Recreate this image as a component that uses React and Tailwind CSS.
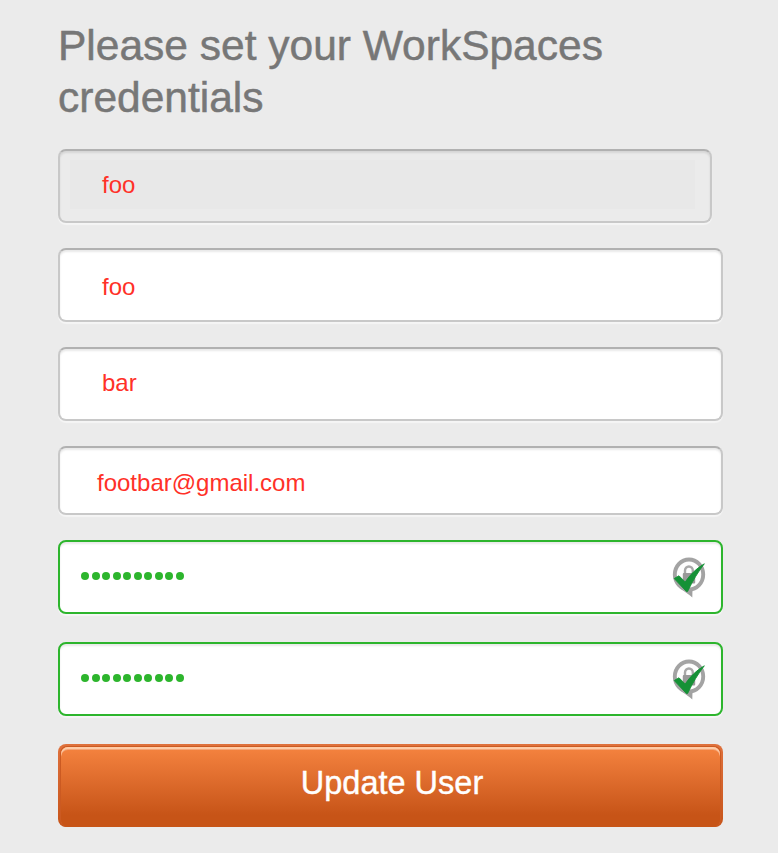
const fieldBase =
  'flex items-center rounded-[8px] border-2 shadow-[inset_0_2px_2px_rgba(0,0,0,0.09),0_2px_1px_rgba(255,255,255,0.5)]';
const grey = 'border-[#c8c8c8] border-t-[#b1b1b1]';

function VerifiedLock() {
  return (
    <svg width="34" height="42" viewBox="0 0 34 42" className="-mt-px mr-[15px] shrink-0" aria-hidden="true">
      <path d="M9 33 L18 39.5 L20.3 41.5 L20.5 32 Z" fill="#a0a0a0" />
      <ellipse cx="17" cy="18.5" rx="14.2" ry="15" fill="#fdfdfd" stroke="#a3a3a3" strokeWidth="3.9" />
      <path d="M13 18 V14.5 A3.9 4 0 0 1 20.8 14.5 V18" fill="none" stroke="#a8a8a8" strokeWidth="2.4" />
      <rect x="10.8" y="17" width="12.4" height="10.5" rx="1" fill="#999" />
      <path d="M2.2 22.5 L7 19.8 L13.2 26 C18 19 24 12.5 32.3 7.8 C26 16 20.5 25 15.6 35.5 H14.4 Z" fill="#159136" stroke="#159136" strokeWidth="0.9" strokeLinejoin="round" />
    </svg>
  );
}

function PasswordField() {
  return (
    <div className={`${fieldBase} h-[74px] justify-between border-[#2db52d] bg-white`}>
      <div className="-mt-[2px] ml-[21px] flex gap-[2.5px]" aria-label="password">
        {Array.from({ length: 10 }, (_, i) => (
          <span key={i} className="size-[8px] rounded-full bg-[#2db52d]" />
        ))}
      </div>
      <VerifiedLock />
    </div>
  );
}

export default function App() {
  return (
    <main className="h-[853px] w-[778px] overflow-hidden bg-[#ebebeb] pl-[58px] pt-[20px] font-['Liberation_Sans',Arial,sans-serif]">
      <h1 className="h-[129px] whitespace-nowrap text-[42.5px] leading-[52px] text-[#777] [-webkit-text-stroke:0.5px_#777]">
        Please set your WorkSpaces
        <br />
        credentials
      </h1>
      <form className="flex w-[665px] flex-col text-[24px] leading-[28px] text-[#ff3128]">
        <div className={`${fieldBase} ${grey} h-[74px] w-[654px] bg-[#ebebeb] pl-[10px]`}>
          <div className="-mt-[3px] flex h-[49px] w-[625px] items-center bg-[#e8e8e8] pl-[32px]">
            <span>foo</span>
          </div>
        </div>
        <div className={`${fieldBase} ${grey} mt-[25px] h-[74px] bg-white pl-[42px] pt-[4px]`}>foo</div>
        <div className={`${fieldBase} ${grey} mt-[25px] h-[74px] bg-white pb-[2px] pl-[42px]`}>bar</div>
        <div className={`${fieldBase} ${grey} mt-[25px] h-[69px] bg-white pl-[37px] pt-[4px]`}>footbar@gmail.com</div>
        <div className="mt-[25px] flex flex-col gap-[28px]">
          <PasswordField />
          <PasswordField />
        </div>
        <button
          type="button"
          className="mt-[28px] flex h-[83px] flex-col rounded-[8px] bg-linear-to-b from-[#df713c] to-[#c75418] px-[2px] pt-[2px] text-[32.5px] leading-[38px] text-white"
        >
          <span className="flex h-[81px] w-full rounded-[7px] bg-[#cb5a22] px-px pt-px">
            <span className="flex h-[80px] w-full justify-center rounded-[7px] bg-linear-to-b from-[#f5833f] to-[#c75417] to-85% pl-[3px] pt-[17px] shadow-[inset_0_2px_0_#ffcba6,inset_0_3px_0_#f5a577] [-webkit-text-stroke:0.4px_white]">
              Update User
            </span>
          </span>
        </button>
      </form>
    </main>
  );
}
